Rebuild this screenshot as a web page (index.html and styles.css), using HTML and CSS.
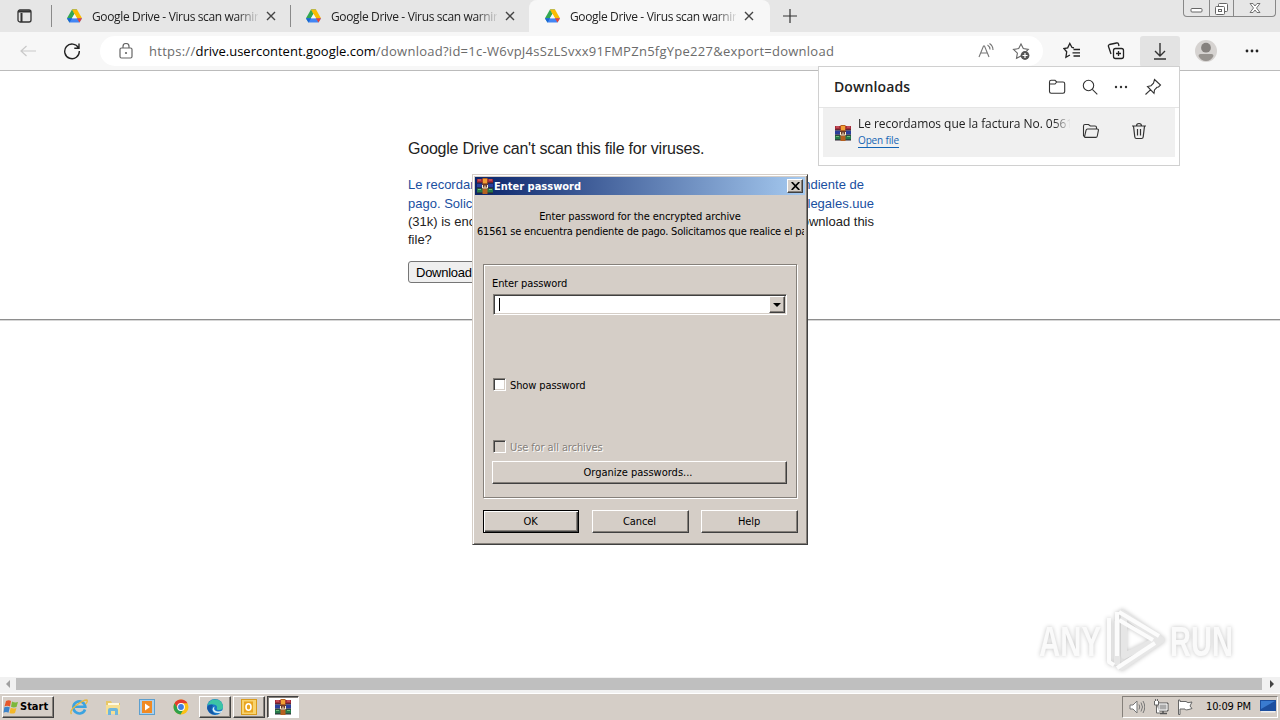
FILE: index.html
```html
<!DOCTYPE html>
<html lang="en">
<head>
    <meta charset="UTF-8">
    <meta name="viewport" content="width=device-width, initial-scale=1.0">
    <title>Google Drive - Virus scan warning</title>
    <link rel="stylesheet" href="styles.css">
</head>
<body>
    <!-- shared icons -->
    <svg class="defs">
        <symbol id="drive" viewBox="0 0 16 14">
            <path d="M5.3 0H10.700L8 4.700z" fill="#188038"/>
            <path d="M5.300 0L8 4.700L2.700 14L0 9.300z" fill="#34a853"/>
            <path d="M5.300 0H10.700L16 9.300H10.600z" fill="#fbbc04"/>
            <path d="M0 9.300H16L13.300 14H2.700z" fill="#4285f4"/>
            <path d="M10.600 9.300H16L13.300 14z" fill="#ea4335"/>
            <path d="M0 9.300H5.400L2.700 14z" fill="#1967d2"/>
            <path d="M8 4.800L10.600 9.300H5.400z" fill="#f7f7f7"/>
        </symbol>
        <symbol id="rar" viewBox="0 0 16 16">
            <path d="M0 1h16v4H0z" fill="#a32b38"/>
            <path d="M0 5.500h16v4H0z" fill="#2b3f9c"/>
            <path d="M0 10h16v5H0z" fill="#27794b"/>
            <path d="M0 4.500h16v1H0zM0 9.500h16v1H0zM0 14.500h16v1H0z" fill="#2d2030"/>
            <path d="M1 2h3M12 2h3" stroke="#df6d74"/>
            <path d="M1 11.500h3M12 11.500h3" stroke="#70bd77"/>
            <path d="M5.500 0h5v16h-5z" fill="#b5601f"/>
            <path d="M6 1h4v4H6z" fill="#f2a134"/>
            <path d="M5 6h6v5H5z" fill="#6b3a2a"/>
            <path d="M5.500 7v3h5V7M8 7.500v2" fill="none" stroke="#fff3cf"/>
        </symbol>
        <symbol id="close" viewBox="0 0 10 10">
            <path d="M1 1l8 8M9 1l-8 8" stroke="#444" stroke-width="1.400"/>
        </symbol>
    </svg>

    <div class="tab-strip">
        <div class="tab-menu">
            <svg width="15" height="14" viewBox="0 0 15 14"><rect x="1" y="1" width="13" height="12" rx="2" fill="none" stroke="#333" stroke-width="1.300"/><path d="M1 2.500h13M4.500 4v9" stroke="#333" stroke-width="2"/></svg>
        </div>
        <div class="tab">
            <svg class="tab-icon"><use href="#drive"/></svg>
            <span class="tab-title">Google Drive - Virus scan warning</span>
            <svg class="tab-close"><use href="#close"/></svg>
        </div>
        <div class="tab">
            <svg class="tab-icon"><use href="#drive"/></svg>
            <span class="tab-title">Google Drive - Virus scan warning</span>
            <svg class="tab-close"><use href="#close"/></svg>
        </div>
        <div class="tab active">
            <svg class="tab-icon"><use href="#drive"/></svg>
            <span class="tab-title">Google Drive - Virus scan warning</span>
            <svg class="tab-close"><use href="#close"/></svg>
        </div>
        <svg class="new-tab" width="14" height="14" viewBox="0 0 14 14"><path d="M7 0v14M0 7h14" stroke="#333" stroke-width="1.200"/></svg>
        <div class="window-buttons">
            <div class="win-min"><svg width="13" height="16" viewBox="0 0 13 16"><rect x="1" y="8.500" width="11" height="3.500" rx="1" fill="#fff" stroke="#666"/></svg></div>
            <div class="win-max"><svg width="13" height="15" viewBox="0 0 13 15"><rect x="3.500" y="2.500" width="9" height="8" rx="1" fill="#fff" stroke="#666"/><rect x=".5" y="5.500" width="9" height="8" rx="1" fill="#fff" stroke="#666"/><rect x="3.500" y="8.500" width="3" height="2" fill="none" stroke="#666"/></svg></div>
            <div class="win-close"><svg width="12" height="12" viewBox="0 0 12 12"><path d="M1 1.500h3L6 4l2-2.500h3L7.500 6l3.500 4.500H8L6 8l-2 2.500H1L4.500 6z" fill="#fff" stroke="#666" stroke-width=".9"/></svg></div>
        </div>
    </div>

    <div class="toolbar">
        <svg class="back" width="16" height="12" viewBox="0 0 16 12"><path d="M16 6H1M6.500 1L1 6l5.500 5" fill="none" stroke="#c9c9c9" stroke-width="1.200"/></svg>
        <svg class="reload" width="18" height="18" viewBox="0 0 18 18"><path d="M15.500 6A7.300 7.300 0 1 0 16.300 9M16 1.500V6.300H11.300" fill="none" stroke="#222" stroke-width="1.400"/></svg>
        <div class="address">
            <svg class="lock" width="14" height="16" viewBox="0 0 14 16"><rect x="1" y="5" width="12" height="10" rx="1.500" fill="none" stroke="#666" stroke-width="1.200"/><path d="M4 5V3.500a3 3 0 0 1 6 0V5" fill="none" stroke="#666" stroke-width="1.200"/><circle cx="7" cy="10" r="1.100" fill="#666"/></svg>
            <span class="url">https://<b>drive.usercontent.google.com</b>/download?id=1c-W6vpJ4sSzLSvxx91FMPZn5fgYpe227&amp;export=download</span>
            <svg class="read" width="16" height="16" viewBox="0 0 16 16"><path d="M1 14L5.500 3h1L11 14M2.700 10h6.600M9.500 2q2.500 1.500 2.500 4.500M11.500.5q3.500 2.200 3.500 6.500" fill="none" stroke="#777" stroke-width="1.100"/></svg>
            <svg class="fav" width="18" height="18" viewBox="0 0 18 18"><path d="M9 14l-4.500 2.300.9-5.200L1.500 7.400l5.200-.8L9 2l2.300 4.600 5 .8-2 2" fill="none" stroke="#666" stroke-width="1.100"/><circle cx="13" cy="13.500" r="4.400" fill="#555"/><path d="M13 11v5M10.500 13.500h5" stroke="#fff" stroke-width="1.200"/></svg>
        </div>
        <svg class="tool t1" width="18" height="18" viewBox="0 0 18 18"><path d="M11 5.800l-2-.3L6.800 1.500 4.700 5.800.9 6.500 3.700 9.800l-.8 5.500 4-2.300M10.500 7.500H17M9.500 10.800H17M10.500 14H17" fill="none" stroke="#222" stroke-width="1.300"/></svg>
        <svg class="tool t2" width="18" height="18" viewBox="0 0 18 18"><rect x="6.500" y="6.500" width="10" height="10" rx="2" fill="none" stroke="#222" stroke-width="1.300"/><path d="M11.500 9v5M9 11.500h5M4 12L1.500 4.500Q1 3 2.500 2.500L9.500 1q1.500-.3 2 1l.5 2" fill="none" stroke="#222" stroke-width="1.300"/></svg>
        <div class="tool-down"><svg width="14" height="17" viewBox="0 0 14 17"><path d="M7 0v13M2 8l5 5 5-5M1 16h12" fill="none" stroke="#333" stroke-width="1.400"/></svg></div>
        <svg class="avatar" width="22" height="22" viewBox="0 0 22 22"><circle cx="11" cy="11" r="11" fill="#d6d3d1"/><circle cx="11" cy="7.700" r="4.900" fill="#85817e"/><path d="M3.500 16q0-2 2-2h11q2 0 2 2-2.500 5-7.500 5t-7.500-5z" fill="#97938f"/></svg>
        <svg class="more" width="14" height="4" viewBox="0 0 14 4"><g fill="#222"><circle cx="2" cy="2" r="1.400"/><circle cx="7" cy="2" r="1.400"/><circle cx="12" cy="2" r="1.400"/></g></svg>
    </div>

    <main class="page">
        <div class="warning">
            <h1>Google Drive can't scan this file for viruses.</h1>
            <div class="line first link"><span>Le recordamos</span><span>pendiente de</span></div>
            <div class="line link"><span>pago. Solicitamos</span><span>legales.uue</span></div>
            <div class="line"><span>(31k) is encrypted</span><span>download this</span></div>
            <div class="line"><span>file?</span></div>
            <button class="download">Download</button>
        </div>
        <hr>
    </main>

    <div class="scrollbar">
        <svg width="16" height="14" viewBox="0 0 16 14"><path d="M10 3v8L6 7z" fill="#a0a0a0"/></svg>
        <div class="thumb"></div>
        <svg width="18" height="14" viewBox="0 0 18 14"><path d="M8 3v8l4-4z" fill="#444"/></svg>
    </div>

    <footer class="taskbar">
        <div class="start">
            <svg width="17" height="16" viewBox="0 0 17 16"><path d="M3 2q3-1.500 5 0L7 7.500q-3-1.500-5.500 0z" fill="#e6582b"/><path d="M9 2.500q3 1.500 6 .5L13.500 8q-3 1-5.500-.2z" fill="#7cb83c"/><path d="M1.300 8.300q3-1.300 5.500 0l-1.300 5.500q-2.500-1.500-5 0z" fill="#3c83c9"/><path d="M7.700 8.700q3 1.500 5.700.2L12 14q-3 1-5.500 0z" fill="#f4b829"/></svg>
            <span>Start</span>
        </div>
        <div class="quick">
            <svg width="18" height="18" viewBox="0 0 18 18"><path d="M15 11.500A6 6 0 1 1 15.300 8.700H5" fill="none" stroke="#3ba3e0" stroke-width="2.600"/><path d="M1.500 16Q-1 13 6 7.500T17 2q1 1.500-1.500 4" fill="none" stroke="#e8b83c" stroke-width="1.300"/></svg>
            <svg width="18" height="18" viewBox="0 0 18 18"><path d="M2 3h5l1 2h8v11H2z" fill="#e8c766"/><path d="M4 5h11v3H4z" fill="#fff9df"/><path d="M2 7h14v9H2z" fill="#f6df93"/><path d="M4 17v-5q0-2 2-2h6q2 0 2 2v5h-3v-4H7v4z" fill="#6eb6dc"/></svg>
            <svg width="18" height="18" viewBox="0 0 18 18"><rect x="1.500" y="1.500" width="15" height="15" fill="#a9d0ee" stroke="#5d9fce"/><rect x="4" y="3" width="10" height="12" fill="#f08a24"/><path d="M7 5.500v7l5-3.500z" fill="#fff"/></svg>
            <svg width="18" height="18" viewBox="0 0 18 18"><circle cx="9" cy="9" r="7.500" fill="#fbc116"/><path d="M2.500 5.300A7.500 7.500 0 0 1 15.500 5.300H9L5.800 11z" fill="#e33b2e"/><path d="M2.500 5.300A7.500 7.500 0 0 0 8.500 16.500L12 10.500 6 11z" fill="#2da14b"/><circle cx="9" cy="9" r="3.900" fill="#fff"/><circle cx="9" cy="9" r="2.900" fill="#3e7de0"/></svg>
        </div>
        <div class="task"><svg width="18" height="18" viewBox="0 0 18 18"><circle cx="9" cy="9" r="8" fill="#1878c8"/><path d="M1.500 7A8 8 0 0 1 17 8q.5 4-4 4-3 0-2-2 .5-3-3-3.500Q4 6 1.500 7z" fill="#3cc4a5"/><path d="M7 7q-4 6 3 9.500Q3 17 1 10q1.500-4 6-3z" fill="#1556a5"/><path d="M8.500 8.500q-1.500 4.500 3.500 5 2.500 0 4.500-1l-1 2q-8 2-9-3 0-2 2-3z" fill="#d6edf7"/></svg></div>
        <div class="task"><svg width="18" height="18" viewBox="0 0 18 18"><rect x="1.500" y="1.500" width="15" height="15" fill="#f8d36d" stroke="#d99b1c"/><rect x="4" y="3.500" width="9" height="11" fill="#e9a520"/><ellipse cx="8.500" cy="9" rx="2.500" ry="3.300" fill="none" stroke="#fff" stroke-width="1.600"/></svg></div>
        <div class="task pressed"><svg width="16" height="16"><use href="#rar"/></svg></div>
        <div class="tray">
            <svg width="16" height="14" viewBox="0 0 16 14"><path d="M1 5h3l4-4v12L4 9H1z" fill="#fff" stroke="#777"/><path d="M10 4.500q1.500 2.500 0 5M12 2.500q3 4.500 0 9M14 1q3.500 6 0 12" fill="none" stroke="#777"/></svg>
            <svg width="16" height="16" viewBox="0 0 16 16"><path d="M5 4h10v8H5z" fill="#aaa" stroke="#555"/><path d="M6 5h8v6H6z" fill="none" stroke="#fff"/><path d="M7 14.500h7M10 12v2" stroke="#555" stroke-width="1.500"/><path d="M1.500 2v4h4V2M2.500 0v2M4.500 0v2M3.500 6v8H7" fill="#fff" stroke="#666"/></svg>
            <svg width="16" height="16" viewBox="0 0 16 16"><path d="M1.500 1v14.500h1.500V10h5q0 2 7-.5L13 7l2-4q-5 1.500-6-.5H3V1z" fill="#fff" stroke="#666"/></svg>
            <span class="clock">10:09 PM</span>
            <svg class="desktop" width="16" height="13" viewBox="0 0 16 13"><path d="M0 0h16v11H0z" fill="#1d4f9f"/><path d="M1 1h14L1 9z" fill="#3a7bd0"/><path d="M1 11h14v1.500H1z" fill="#eee"/></svg>
        </div>
    </footer>

    <section class="downloads">
        <header>
            <h2>Downloads</h2>
            <svg width="18" height="16" viewBox="0 0 18 16"><path d="M1.500 3q0-1.700 1.700-1.700H7L8.700 3H15q1.700 0 1.700 1.700V12.500q0 1.700-1.700 1.700H3.200q-1.700 0-1.700-1.700zM1.500 5H7l1.700-2" fill="none" stroke="#333" stroke-width="1.100"/></svg>
            <svg width="16" height="16" viewBox="0 0 16 16"><circle cx="6.500" cy="6.500" r="5.200" fill="none" stroke="#333" stroke-width="1.100"/><path d="M10.300 10.300l5 5" stroke="#333" stroke-width="1.100"/></svg>
            <svg width="14" height="4" viewBox="0 0 14 4"><g fill="#333"><circle cx="2" cy="2" r="1.200"/><circle cx="7" cy="2" r="1.200"/><circle cx="12" cy="2" r="1.200"/></g></svg>
            <svg width="18" height="18" viewBox="0 0 18 18"><path d="M10.500 1.500l6 5.500-2 2-1.500.3-2.500 2.700-.5 3.300L3.500 8.500 7 7.700l2.500-2.500zM6.700 11.700L1.500 16.500" fill="none" stroke="#333" stroke-width="1.100"/></svg>
        </header>
        <div class="file">
            <svg class="file-icon" width="16" height="16"><use href="#rar"/></svg>
            <div class="file-info">
                <div class="file-name">Le recordamos que la factura No. 0561561</div>
                <a class="open-file">Open file</a>
            </div>
            <svg class="folder" width="18" height="16" viewBox="0 0 18 16"><path d="M2.500 14L1.500 12.500V3q0-1.500 1.500-1.500h3.500L8.300 3H13q1.500 0 1.500 1.500V6M2.500 14L4 7.300Q4.300 6 5.500 6h9.700q1.500 0 1.200 1.400L15.300 13q-.3 1.400-1.500 1.400H3.500q-1 0-1-.4z" fill="none" stroke="#333" stroke-width="1.100"/></svg>
            <svg class="trash" width="16" height="18" viewBox="0 0 16 18"><path d="M1 4h14M5.500 4q0-2.500 2.500-2.500T10.500 4M2.500 4l1.300 11q.2 1.500 1.600 1.500h5.200q1.400 0 1.600-1.500L13.500 4M6.500 7v6.500M9.500 7v6.500" fill="none" stroke="#333" stroke-width="1.200"/></svg>
        </div>
    </section>

    <div class="dialog">
        <div class="title-bar">
            <svg width="16" height="16"><use href="#rar"/></svg>
            <span>Enter password</span>
            <div class="dialog-close"><svg width="9" height="8" viewBox="0 0 9 8"><path d="M.7 0l7.600 8M8.300 0L.7 8" stroke="#000" stroke-width="1.700"/></svg></div>
        </div>
        <div class="prompt">Enter password for the encrypted archive</div>
        <div class="archive">61561 se encuentra pendiente de pago. Solicitamos que realice el pago</div>
        <div class="group">
            <label class="field-label">Enter password</label>
            <div class="combo">
                <div class="caret"></div>
                <div class="arrow"><svg width="8" height="4" viewBox="0 0 8 4"><path d="M0 0h8L4 4z"/></svg></div>
            </div>
            <div class="check show"><i></i><span>Show password</span></div>
            <div class="check all disabled"><i></i><span>Use for all archives</span></div>
            <div class="btn organize">Organize passwords...</div>
        </div>
        <div class="buttons">
            <div class="btn default">OK</div>
            <div class="btn">Cancel</div>
            <div class="btn">Help</div>
        </div>
    </div>

    <svg class="watermark" width="206" height="70" viewBox="0 0 206 70">
        <g class="mark-text">
            <text x="5" y="50" textLength="62" lengthAdjust="spacingAndGlyphs">ANY</text>
            <text x="136" y="50" textLength="63" lengthAdjust="spacingAndGlyphs">RUN</text>
        </g>
        <g fill="none" stroke-linejoin="round">
            <path d="M83 15v44M90 8v42l32-16zM86 5L128 34 86 63" stroke="#e6e6e6" stroke-width="6"/>
            <path d="M75 12v44l5 3M83 6v44M85 6l40 24M85 14l34 20M121 37L83 62" stroke="#fcfcfc" stroke-width="4"/>
        </g>
    </svg>
</body>
</html>
```
FILE: styles.css
```css
* {
    margin: 0;
    padding: 0;
    box-sizing: border-box;
}

body {
    width: 1280px;
    height: 720px;
    display: flex;
    flex-direction: column;
    position: relative;
    overflow: hidden;
    background: #fff;
    color: #000;
    font-family: "Open Sans", sans-serif;
}

svg {
    display: block;
    flex-shrink: 0;
}

.defs {
    position: absolute;
    width: 0;
    height: 0;
}

/* tabs */
.tab-strip {
    height: 32px;
    flex-shrink: 0;
    display: flex;
    background: #e6e6e6;
}

.tab-menu {
    width: 51px;
    padding: 9px 0 0 17px;
}

.tab {
    width: 239px;
    display: flex;
    align-items: center;
    padding: 0 14px 0 15px;
    border-left: 1px solid #8a8a8a;
    border-image: linear-gradient(transparent 6px, #8a8a8a 6px, #8a8a8a 26px, transparent 26px) 1;
}

.tab.active {
    width: 241px;
    padding-right: 16px;
    background: #f7f7f7;
    border-image: none;
    border-color: #f7f7f7;
    border-radius: 8px 8px 0 0;
}

.tab-icon {
    width: 15px;
    height: 14px;
    margin-right: 10px;
}

.tab-title {
    width: 166px;
    margin-right: 8px;
    overflow: hidden;
    white-space: nowrap;
    font-size: 12px;
    letter-spacing: -0.36px;
    color: #222;
    -webkit-mask-image: linear-gradient(90deg, #000 145px, transparent 168px);
    mask-image: linear-gradient(90deg, #000 145px, transparent 168px);
}

.tab-close {
    width: 10px;
    height: 10px;
}

.new-tab {
    margin: 9px 0 0 13px;
}

.window-buttons {
    display: flex;
    height: 17px;
    margin: 0 4px 0 auto;
    border: 1px solid #888;
    border-top: 0;
    border-radius: 0 0 4px 4px;
}

.window-buttons div {
    display: flex;
    justify-content: center;
    align-items: center;
}

.win-min {
    width: 25px;
}

.win-max {
    width: 25px;
    border-left: 1px solid #888;
    border-right: 1px solid #888;
}

.win-close {
    width: 41px;
}

/* toolbar */
.toolbar {
    height: 39px;
    flex-shrink: 0;
    display: flex;
    align-items: center;
    background: #f7f7f7;
    border-bottom: 1px solid #bbb;
}

.back {
    margin-left: 20px;
}

.reload {
    margin-left: 27px;
}

.address {
    width: 943px;
    height: 30px;
    margin-left: 19px;
    padding: 0 13px 0 19px;
    display: flex;
    align-items: center;
    background: #fff;
    border-radius: 15px;
}

.url {
    margin-left: 16px;
    font-size: 13px;
    letter-spacing: 0.26px;
    white-space: nowrap;
    color: #6b6b6b;
}

.url b {
    font-weight: normal;
    letter-spacing: 0;
    color: #000;
}

.read {
    margin-left: auto;
    margin-right: 18px;
}

.t1 {
    margin-left: 20px;
}

.t2 {
    margin-left: 26px;
}

.tool-down {
    width: 40px;
    height: 31px;
    margin-left: 15px;
    display: flex;
    align-items: center;
    justify-content: center;
    background: #e3e3e3;
    border-radius: 3px;
}

.avatar {
    margin-left: 15px;
}

.more {
    margin-left: 28px;
}

/* page */
.page {
    flex: 1;
    font-family: "Liberation Sans", sans-serif;
}

.warning {
    width: 468px;
    margin-left: 408px;
    padding-top: 67px;
}

.warning h1 {
    font-size: 16px;
    font-weight: normal;
    line-height: 22px;
    letter-spacing: -0.22px;
    color: #222;
    white-space: nowrap;
}

.line {
    width: 466px;
    display: flex;
    justify-content: space-between;
    font-size: 13px;
    line-height: 18px;
    color: #222;
}

.line.link {
    line-height: 19px;
    color: #1a4f9f;
}

.line.first {
    width: 456px;
    margin-top: 15px;
}

.download {
    display: block;
    margin-top: 12px;
    width: 124px;
    height: 22px;
    padding: 0 7px;
    text-align: left;
    font-family: "Liberation Sans", sans-serif;
    font-size: 13px;
    white-space: nowrap;
    letter-spacing: -0.25px;
    color: #000;
    background: #efefef;
    border: 1px solid #767676;
    border-radius: 3px;
}

.page hr {
    margin-top: 36px;
    border: 0;
    border-top: 1px solid #8e8e8e;
    border-bottom: 1px solid #d6d6d6;
}

.scrollbar {
    height: 16px;
    flex-shrink: 0;
    display: flex;
    align-items: center;
    padding-bottom: 2px;
    background: #f1f1f1;
}

.thumb {
    flex: 1;
    height: 12px;
    background: #bfbfbf;
}

/* taskbar */
.taskbar {
    height: 27px;
    flex-shrink: 0;
    display: flex;
    align-items: center;
    padding: 0 2px 1px;
    background: #d5cec7;
    border-top: 1px solid #fff;
    font-family: "DejaVu Sans Condensed", "DejaVu Sans", sans-serif;
    font-size: 11px;
}

.start {
    width: 52px;
    height: 22px;
    display: flex;
    align-items: center;
    font-weight: bold;
    background: #d5cec7;
    border: 1px solid;
    border-color: #fff #404040 #404040 #fff;
    box-shadow: inset -1px -1px #85807a;
}

.quick {
    display: flex;
    gap: 16px;
    margin: 0 9px 0 16px;
}

.task {
    width: 32px;
    height: 22px;
    margin-right: 2px;
    display: flex;
    align-items: center;
    justify-content: center;
    border: 1px solid;
    border-color: #fff #404040 #404040 #fff;
    box-shadow: inset -1px -1px #85807a;
}

.task.pressed {
    background: #fff;
    border-color: #404040 #fff #fff #404040;
    box-shadow: inset 1px 1px #85807a;
}

.tray {
    width: 156px;
    height: 22px;
    margin-left: auto;
    padding: 0 1px 0 6px;
    display: flex;
    align-items: center;
    gap: 8px;
    border: 1px solid;
    border-color: #85807a #fff #fff #85807a;
}

.clock {
    margin-left: 5px;
    white-space: nowrap;
    letter-spacing: -0.15px;
}

.desktop {
    margin-left: auto;
}

/* downloads flyout over the page */
.downloads {
    position: absolute;
    left: 818px;
    top: 66px;
    width: 362px;
    height: 100px;
    background: #fff;
    border: 1px solid #d0d0d0;
}

.downloads header {
    height: 41px;
    display: flex;
    align-items: center;
    gap: 16px;
    padding: 0 17px 1px 15px;
    border-bottom: 1px solid #e5e5e5;
}

.downloads h2 {
    margin-right: auto;
    font-size: 14px;
    font-weight: 600;
    letter-spacing: 0.1px;
    color: #222;
}

.file {
    height: 49px;
    margin: 0 4px;
    padding: 0 28px 3px 12px;
    display: flex;
    align-items: center;
    background: #f0f0f0;
}

.file-icon {
    margin-top: 3px;
}

.file-info {
    width: 212px;
    margin-left: 7px;
    padding-top: 1px;
    font-size: 12px;
}

.file-name {
    overflow: hidden;
    white-space: nowrap;
    line-height: 18px;
    letter-spacing: -0.05px;
    color: #222;
    -webkit-mask-image: linear-gradient(90deg, #000 195px, transparent 213px);
    mask-image: linear-gradient(90deg, #000 195px, transparent 213px);
}

.open-file {
    display: block;
    width: 41px;
    font-size: 10px;
    line-height: 14px;
    letter-spacing: -0.15px;
    color: #1464b4;
    border-bottom: 1px solid #1464b4;
}

.folder {
    margin-left: 12px;
}

.trash {
    margin-left: auto;
}

/* password dialog window */
.dialog {
    position: absolute;
    left: 472px;
    top: 174px;
    width: 336px;
    height: 371px;
    padding: 2px 2px 0;
    background: #d5cec7;
    border: 1px solid;
    border-color: #d5cec7 #404040 #404040 #d5cec7;
    box-shadow: inset 1px 1px #fff, inset -1px -1px #85807a;
    font-family: "DejaVu Sans Condensed", "DejaVu Sans", sans-serif;
    font-size: 11px;
    letter-spacing: -0.1px;
}

.title-bar {
    height: 18px;
    display: flex;
    align-items: center;
    padding: 0 2px;
    background: linear-gradient(90deg, #0a246a, #a6caf0);
    color: #fff;
    font-weight: bold;
    letter-spacing: 0;
}

.title-bar span {
    margin-left: 1px;
}

.dialog-close {
    width: 16px;
    height: 14px;
    margin-left: auto;
    display: flex;
    align-items: center;
    justify-content: center;
    background: #d5cec7;
    border: 1px solid;
    border-color: #fff #404040 #404040 #fff;
    box-shadow: inset -1px -1px #85807a;
}

.prompt {
    margin-top: 14px;
    line-height: 15px;
    text-align: center;
}

.archive {
    width: 327px;
    margin-left: 2px;
    line-height: 15px;
    letter-spacing: -0.21px;
    overflow: hidden;
    white-space: nowrap;
}

.group {
    height: 234px;
    margin: 25px 8px 0;
    padding: 11px 8px 0;
    display: flex;
    flex-direction: column;
    border: 1px solid #85807a;
    box-shadow: inset 1px 1px #fff, 1px 1px #fff;
}

.field-label {
    line-height: 15px;
}

.combo {
    height: 21px;
    margin: 3px 1px 0;
    display: flex;
    align-items: center;
    justify-content: space-between;
    padding: 0 1px 0 5px;
    background: #fff;
    border: 1px solid;
    border-color: #85807a #fff #fff #85807a;
    box-shadow: inset 1px 1px #404040, inset -1px -1px #d5cec7;
}

.caret {
    width: 1px;
    height: 13px;
    background: #000;
}

.arrow {
    width: 16px;
    height: 17px;
    display: flex;
    align-items: center;
    justify-content: center;
    background: #d5cec7;
    border: 1px solid;
    border-color: #fff #404040 #404040 #fff;
    box-shadow: inset -1px -1px #85807a;
}

.check {
    display: flex;
    align-items: center;
    line-height: 15px;
    padding-left: 1px;
}

.check i {
    width: 13px;
    height: 13px;
    margin-right: 4px;
    background: #fff;
    border: 1px solid;
    border-color: #85807a #fff #fff #85807a;
    box-shadow: inset 1px 1px #404040, inset -1px -1px #d5cec7;
}

.check span {
    padding-top: 2px;
}

.show {
    margin-top: 61px;
}

.all {
    margin-top: 45px;
}

.disabled {
    color: #85807a;
    text-shadow: 1px 1px #fff;
}

.disabled i {
    background: #d5cec7;
}

.btn {
    width: 97px;
    height: 23px;
    padding-right: 1px;
    display: flex;
    align-items: center;
    justify-content: center;
    background: #d5cec7;
    border: 1px solid;
    border-color: #fff #404040 #404040 #fff;
    box-shadow: inset -1px -1px #85807a;
}

.btn.organize {
    width: 295px;
    margin-top: 6px;
    padding-right: 3px;
    letter-spacing: 0;
}

.btn.default {
    width: 96px;
    border-color: #000;
    box-shadow: inset 1px 1px #fff, inset -1px -1px #404040, inset -2px -2px #85807a;
}

.buttons {
    display: flex;
    justify-content: space-between;
    margin: 12px 7px 0 8px;
}

/* logo floating over the page */
.watermark {
    position: absolute;
    left: 1034px;
    top: 606px;
    filter: drop-shadow(0 0 2px #c4c4c4);
}

.mark-text {
    font-family: "Liberation Sans Narrow", "Liberation Sans", sans-serif;
    font-weight: bold;
    font-size: 43px;
    fill: #fafafa;
}
```
